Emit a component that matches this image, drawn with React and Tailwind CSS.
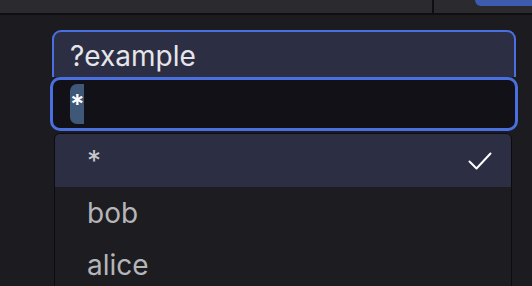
export default function App() {
    const options = ["*", "bob", "alice"]
    const selected = "*"

    return (
        <div className="h-[286px] w-[532px] overflow-hidden bg-[#1c1c20]" style={{ fontFamily: "Inter, 'Noto Sans', sans-serif" }}>
            {/* top bar */}
            <div className="h-[15px] flex border-b-2 border-[#0f0f12] bg-[#2b2b2f]">
                <div className="w-[434px] border-r-2 border-[#0f0f12]"></div>
                <div className="flex-1 flex justify-end">
                    <div className="w-[57px] h-[6px] bg-[#3d5cb0] rounded-bl-[10px]"></div>
                </div>
            </div>

            <div className="pl-[50px] pt-[15px]">
                {/* current value */}
                <div className="ml-[2px] w-[464px] h-[47px] rounded-t-[9px] border-2 border-b-0 border-[#4a6fe0] bg-[#2c2e44] pl-[16px] pt-[9px]">
                    <span className="text-[28px] leading-[30px] text-[#e6e6ea]">?example</span>
                </div>

                {/* search input */}
                <div className="w-[468px] h-[54px] rounded-[10px] border-[3px] border-[#4a6fe0] bg-[#111117] flex items-center pl-[17px]">
                    <span className="h-[40px] w-[14px] flex items-center bg-[#3f5878] rounded-l-[7px] text-[27px] font-semibold text-white leading-none">*</span>
                </div>

                {/* options */}
                <div className="mt-[2px] ml-[4px] w-[458px] rounded-t-[6px] border border-[#0c0c0e] bg-[#1c1c21] overflow-hidden">
                    {options.map(function (o) {
                        const active = o === selected
                        return (
                            <div key={o} className={active ? "h-[53px] flex items-center justify-between pl-[32px] pr-[19px] bg-[#2c2e44]" : "h-[52px] flex items-center pl-[32px] pr-[19px]"}>
                                <span className={active ? "text-[28px] text-[#c8c8cc]" : "text-[28px] text-[#b5b5ba]"}>{o}</span>
                                {active ? (
                                    <svg width="24" height="18" viewBox="0 0 24 18" fill="none" stroke="white" strokeWidth="2" strokeLinecap="round" strokeLinejoin="round">
                                        <path d="M1.5 9.5 L8.5 16.5 L22.5 1.5" />
                                    </svg>
                                ) : ""}
                            </div>
                        )
                    })}
                </div>
            </div>
        </div>
    )
}
